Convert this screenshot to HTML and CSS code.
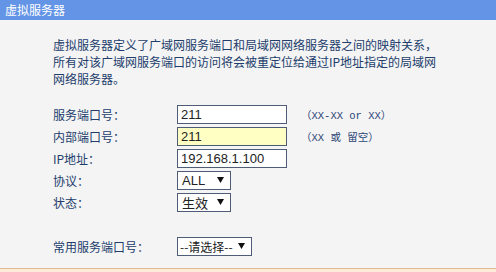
FILE: index.html
```html
<!DOCTYPE html>
<html lang="zh-CN">
<head>
<meta charset="utf-8">
<title>虚拟服务器</title>
<link rel="stylesheet" href="styles.css">
</head>
<body>
<div class="header">虚拟服务器</div>
<div class="content">
  <p class="intro">虚拟服务器定义了广域网服务端口和局域网网络服务器之间的映射关系，<br>所有对该广域网服务端口的访问将会被重定位给通过IP地址指定的局域网<br>网络服务器。</p>
  <div class="form">
    <div class="row">
      <span class="label">服务端口号：</span>
      <span class="input">211</span>
      <span class="hint">（XX-XX or XX）</span>
    </div>
    <div class="row">
      <span class="label">内部端口号：</span>
      <span class="input yellow">211</span>
      <span class="hint">（XX 或 留空）</span>
    </div>
    <div class="row">
      <span class="label">IP地址：</span>
      <span class="input">192.168.1.100</span>
    </div>
    <div class="row">
      <span class="label">协议：</span>
      <span class="select"><span class="val">ALL</span><svg class="arrow" width="7" height="6" viewBox="0 0 7 6"><path d="M0 0H7L3.5 6Z"/></svg></span>
    </div>
    <div class="row">
      <span class="label">状态：</span>
      <span class="select"><span class="val cjk">生效</span><svg class="arrow" width="7" height="6" viewBox="0 0 7 6"><path d="M0 0H7L3.5 6Z"/></svg></span>
    </div>
    <div class="row spacer"></div>
    <div class="row">
      <span class="label">常用服务端口号：</span>
      <span class="select wide"><span class="val cjk small">--请选择--</span><svg class="arrow" width="7" height="6" viewBox="0 0 7 6"><path d="M0 0H7L3.5 6Z"/></svg></span>
    </div>
  </div>
</div>
<div class="footer"></div>
</body>
</html>
```
FILE: styles.css
```css
html, body {
  margin: 0;
  padding: 0;
}
body {
  background: #f4f4f4;
  font-family: "Noto Sans CJK SC", "Liberation Sans", sans-serif;
  font-size: 12px;
  color: #223d6c;
  width: 496px;
  height: 272px;
  overflow: hidden;
}
.header {
  height: 20px;
  line-height: 20px;
  background: #6394e6;
  color: #ffffff;
  padding-left: 5px;
  font-size: 12px;
}
.content {
  height: 248px;
  box-sizing: border-box;
  padding: 16px 0 0 53px;
}
.intro {
  margin: 0;
  line-height: 17px;
}
.form {
  margin-top: 16px;
  display: flex;
  flex-direction: column;
}
.row {
  height: 22px;
  display: flex;
  align-items: center;
}
.label {
  width: 124px;
  flex: none;
}
.input {
  box-sizing: border-box;
  width: 110px;
  height: 19px;
  border: 1px solid #4e5c78;
  background: #ffffff;
  font-family: "Liberation Sans", Arial, sans-serif;
  font-size: 13px;
  line-height: 17px;
  color: #222222;
  padding-left: 3px;
}
.input.yellow {
  background: #ffffc4;
}
.hint {
  margin-left: 14px;
  font-family: "Liberation Mono", "Noto Sans CJK SC", monospace;
  font-size: 10.5px;
  color: #2c4677;
}
.select {
  box-sizing: border-box;
  width: 54px;
  height: 19px;
  border: 1px solid #4e5c78;
  background: #ffffff;
  display: flex;
  align-items: center;
  justify-content: space-between;
  padding: 0 6px 0 4px;
  color: #222222;
  font-family: "Liberation Sans", Arial, sans-serif;
  font-size: 13px;
}
.select.wide {
  width: 75px;
  padding-left: 2px;
}
.val.cjk {
  font-family: "Noto Sans CJK SC", sans-serif;
  font-size: 13px;
}
.val.cjk.small {
  font-size: 12px;
}
.arrow {
  fill: #111111;
  flex: none;
}
.footer {
  border-top: 1px solid #e0bb92;
  background: #fcebd9;
  height: 10px;
}
```
